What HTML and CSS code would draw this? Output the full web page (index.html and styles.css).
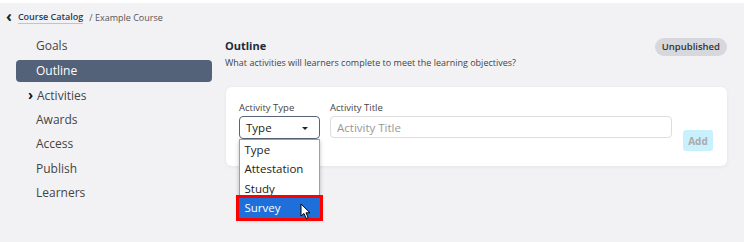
FILE: index.html
```html
<!DOCTYPE html>
<html lang="en">
<head>
  <meta charset="UTF-8" />
  <title>Example Course - Outline</title>
  <link rel="stylesheet" href="styles.css">
</head>
<body>

  <!-- Breadcrumb -->
  <div class="crumbs">
    <span class="crumb-back">&#8249;</span>
    <a href="#" class="crumb-link">Course Catalog</a>
    <span class="crumb-current">/ Example Course</span>
  </div>

  <div class="layout">
    <!-- Side navigation -->
    <nav class="sidenav">
      <div class="nav-item">Goals</div>
      <div class="nav-item active">Outline</div>
      <div class="nav-item has-children"><span class="nav-caret">&#8250;</span>Activities</div>
      <div class="nav-item">Awards</div>
      <div class="nav-item">Access</div>
      <div class="nav-item">Publish</div>
      <div class="nav-item">Learners</div>
    </nav>

    <!-- Main panel -->
    <main class="main">
      <div class="main-head">
        <div>
          <div class="main-title">Outline</div>
          <div class="main-sub">What activities will learners complete to meet the learning objectives?</div>
        </div>
        <span class="status-pill">Unpublished</span>
      </div>

      <div class="card">
        <div class="field field-type">
          <label>Activity Type</label>
          <div class="select">
            <span>Type</span>
            <span class="select-arrow"></span>
            <div class="options">
              <div class="option">Type</div>
              <div class="option">Attestation</div>
              <div class="option">Study</div>
              <div class="option selected">Survey</div>
            </div>
            <svg class="cursor" width="12" height="17" viewBox="0 0 12 17">
              <path d="M1 1 L1 13 L4 10.5 L6.2 15.5 L8.2 14.6 L6 9.8 L10 9.8 Z" fill="#fff" stroke="#000" stroke-width="1" stroke-linejoin="round"/>
            </svg>
          </div>
        </div>
        <div class="field field-title">
          <label>Activity Title</label>
          <input type="text" placeholder="Activity Title">
        </div>
        <button class="add-btn">Add</button>
      </div>
    </main>
  </div>

</body>
</html>
```

FILE: styles.css
```css
body {
  margin: 0;
  padding: 0;
  background: #f2f2f4;
  border-top: 3px solid #fff;
  font-family: 'Open Sans', 'Noto Sans', sans-serif;
  color: #333;
  height: 239px;
  overflow: hidden;
}

.crumbs {
  display: flex;
  align-items: center;
  height: 28px;
  padding-left: 6px;
  font-size: 9px;
}

.crumb-back {
  font-size: 16px;
  font-weight: bold;
  color: #222;
  margin-right: 6px;
  line-height: 1;
  margin-top: -2px;
}

.crumb-link {
  color: #1c3c5e;
  font-weight: 600;
  text-decoration: none;
  border-bottom: 1px solid #8fd4f0;
  line-height: 12px;
  margin-right: 6px;
}

.crumb-current {
  color: #555;
}

.layout {
  display: flex;
  padding-top: 4px;
}

.sidenav {
  width: 196px;
  margin-left: 16px;
  margin-right: 13px;
}

.nav-item {
  height: 22px;
  line-height: 22px;
  margin-bottom: 2.5px;
  padding-left: 20px;
  font-size: 12px;
  color: #444;
  border-radius: 4px;
}

.nav-item.active {
  background: #536279;
  color: #fff;
}

.nav-item.has-children {
  padding-left: 12px;
}

.nav-caret {
  display: inline-block;
  width: 9px;
  font-weight: bold;
  color: #111;
  font-size: 14px;
}

.main {
  flex: 1;
  margin-right: 17px;
}

.main-head {
  display: flex;
  justify-content: space-between;
  align-items: flex-start;
  padding-top: 4px;
}

.main-title {
  font-size: 11px;
  font-weight: 700;
  color: #1f2a36;
  line-height: 14px;
}

.main-sub {
  font-size: 9px;
  color: #444;
  margin-top: 3px;
}

.status-pill {
  background: #d6d8de;
  color: #333;
  font-size: 9.5px;
  font-weight: 600;
  border-radius: 10px;
  padding: 3px 7px;
  line-height: 12px;
  margin-top: -1px;
}

.card {
  position: relative;
  display: flex;
  align-items: flex-end;
  margin-top: 18px;
  margin-left: 1px;
  height: 79px;
  box-sizing: border-box;
  padding: 0 14px 15px 13px;
  background: #fff;
  border-radius: 6px;
  box-shadow: 0 1px 4px rgba(0, 0, 0, 0.06);
}

.field {
  display: flex;
  flex-direction: column;
  align-self: flex-start;
  margin-top: 15px;
}

.field label {
  font-size: 9.5px;
  color: #444;
  margin-bottom: 2px;
  line-height: 12px;
}

.field-type {
  width: 81px;
  margin-right: 10px;
}

.field-title {
  flex: 1;
  margin-right: 11px;
}

.select {
  position: relative;
  height: 23px;
  box-sizing: border-box;
  border: 1.5px solid #5a6478;
  border-radius: 4px;
  padding-left: 6px;
  display: flex;
  align-items: center;
  font-size: 11.5px;
  color: #222;
}

.select-arrow {
  position: absolute;
  right: 11px;
  top: 10px;
  border-left: 3px solid transparent;
  border-right: 3px solid transparent;
  border-top: 3px solid #222;
}

.options {
  position: absolute;
  left: -1.5px;
  top: 21.5px;
  width: 81px;
  box-sizing: border-box;
  background: #fff;
  border: 1px solid #a0a0a0;
  box-shadow: 0 2px 4px rgba(0, 0, 0, 0.25);
  z-index: 5;
}

.option {
  height: 19.5px;
  line-height: 19.5px;
  padding-left: 5px;
  font-size: 11.5px;
  color: #222;
}

.option.selected {
  background: #1e6fd9;
  color: #fff;
  outline: 3px solid #f00;
  outline-offset: 0;
  position: relative;
  margin: 0 -1px -1px -1px;
  padding-left: 6px;
}

.cursor {
  position: absolute;
  left: 60px;
  top: 86px;
  z-index: 6;
}

.field-title input {
  height: 22px;
  box-sizing: border-box;
  border: 1px solid #ddd;
  border-radius: 4px;
  padding: 0 6px;
  font-family: inherit;
  font-size: 11.5px;
  color: #222;
}

.field-title input::placeholder {
  color: #999;
}

.add-btn {
  width: 30px;
  height: 21px;
  padding: 0;
  background: #c9f1fd;
  color: #aaa;
  border: none;
  border-radius: 3px;
  font-family: inherit;
  font-size: 10px;
  font-weight: 700;
}
```
